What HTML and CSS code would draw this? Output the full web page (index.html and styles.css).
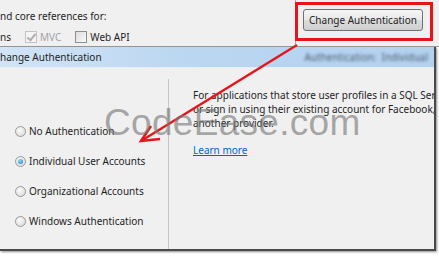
FILE: index.html
```html
<!DOCTYPE html>
<html lang="en">
<head>
    <meta charset="UTF-8">
    <meta name="viewport" content="width=device-width, initial-scale=1.0">
    <title>Change Authentication</title>
    <link rel="stylesheet" href="styles.css">
</head>
<body>
    <div class="screen">
        <div class="host">
            <div class="host-left">
                <p class="host-line">nd core references for:</p>
                <div class="host-line refs">
                    <span>ns</span>
                    <label class="ref disabled"><span class="check checked"></span>MVC</label>
                    <label class="ref"><span class="check"></span>Web API</label>
                </div>
            </div>
            <div class="host-right">
                <button class="btn">Change Authentication</button>
            </div>
        </div>

        <div class="dialog">
            <div class="titlebar">
                <span>hange Authentication</span>
                <span class="blurred">Authentication:&nbsp; Individual</span>
            </div>
            <div class="dialog-body">
                <div class="options">
                    <label class="option"><span class="radio"></span>No Authentication</label>
                    <label class="option"><span class="radio selected"></span>Individual User Accounts</label>
                    <label class="option"><span class="radio"></span>Organizational Accounts</label>
                    <label class="option"><span class="radio"></span>Windows Authentication</label>
                </div>
                <div class="info">
                    <p class="desc">For applications that store user profiles in a SQL Server database. Users can register,</p>
                    <p class="desc">or sign in using their existing account for Facebook, Twitter, Google, Microsoft, or</p>
                    <p class="desc">another provider.</p>
                    <a class="learn" href="#">Learn more</a>
                </div>
            </div>
        </div>

        <!-- annotation drawn on top of the screenshot -->
        <div class="highlight"></div>
        <svg class="arrow" width="439" height="257" viewBox="0 0 439 257">
            <path d="M297 45 L141 141" stroke="#e8141c" stroke-width="2.5" fill="none"/>
            <path d="M151 126 L141 141 L160 139" stroke="#e8141c" stroke-width="2.5" fill="none"/>
        </svg>
        <div class="watermark">CodeEase.com</div>
    </div>
</body>
</html>
```

FILE: styles.css
```css
* {
    box-sizing: border-box;
}
body {
    margin: 0;
    background-color: #fff;
    font-family: "Noto Sans", "Open Sans", sans-serif;
    font-size: 10px;
    color: #1e1e1e;
}
.screen {
    position: relative;
    width: 439px;
    height: 257px;
    overflow: hidden;
}
.host {
    display: flex;
    height: 47px;
    background-color: #f0f0f0;
    border-bottom: 1px solid #9a9a9a;
}
.host-left {
    width: 296px;
    border-right: 1px solid #a8a8a8;
    padding-top: 8px;
}
.host-line {
    margin: 0;
    height: 16px;
    line-height: 16px;
    white-space: nowrap;
}
.refs {
    display: flex;
    align-items: center;
    margin-top: 5px;
}
.ref {
    display: flex;
    align-items: center;
    gap: 3px;
    margin-left: 14px;
}
.disabled {
    color: #a3a3a3;
}
.check {
    width: 12px;
    height: 12px;
    border: 1px solid #8f8f8f;
    background: linear-gradient(135deg, #dcdcdc, #fafafa);
    position: relative;
}
.disabled .check {
    border-color: #c4c4c4;
    background: #f4f4f4;
}
.checked::after {
    content: "";
    position: absolute;
    left: 3px;
    top: 0px;
    width: 3px;
    height: 7px;
    border: solid #b0b0b0;
    border-width: 0 2px 2px 0;
    transform: rotate(40deg);
}
.host-right {
    flex: 1;
    padding: 9px 0 0 7px;
}
.btn {
    font-family: inherit;
    font-size: 10px;
    color: #1e1e1e;
    width: 120px;
    height: 22px;
    border: 1px solid #707070;
    border-radius: 3px;
    background: linear-gradient(#f6f6f6 0%, #e8e8e8 50%, #dcdcdc 51%, #cfcfcf 100%);
    padding: 0;
}
.dialog {
    width: 436px;
    height: 204px;
    background-color: #f0f0f0;
    border-right: 2px solid #4a4a4a;
    border-bottom: 2px solid #4a4a4a;
    box-shadow: 1px 1px 2px rgba(0, 0, 0, 0.45);
    overflow: hidden;
}
.titlebar {
    display: flex;
    justify-content: space-between;
    align-items: center;
    height: 21px;
    padding-right: 6px;
    background: linear-gradient(90deg, #d2e4f6 0%, #bad6f1 45%, #b4d1ee 100%);
    border-bottom: 1px solid #e6eef6;
    white-space: nowrap;
}
.blurred {
    color: transparent;
    text-shadow: 0 0 3px #4c5e74;
}
.dialog-body {
    display: flex;
    padding-top: 11px;
    height: 181px;
}
.options {
    flex-shrink: 0;
    width: 169px;
    border-right: 1px solid #c6c6c6;
    padding: 37px 0 0 15px;
}
.option {
    display: flex;
    align-items: center;
    gap: 3px;
    height: 30px;
    white-space: nowrap;
}
.radio {
    width: 11px;
    height: 11px;
    border-radius: 50%;
    border: 1px solid #9a9a9a;
    background: radial-gradient(circle at 40% 35%, #fbfbfb, #d4d4d4);
    position: relative;
}
.selected::after {
    content: "";
    position: absolute;
    left: 2px;
    top: 2px;
    width: 5px;
    height: 5px;
    border-radius: 50%;
    background: radial-gradient(circle at 40% 35%, #8fdcfa, #1877b8);
}
.info {
    flex: 1;
    min-width: 0;
    padding: 9px 0 0 24px;
    white-space: nowrap;
}
.desc {
    margin: 0;
    line-height: 14px;
}
.learn {
    display: inline-block;
    margin-top: 13px;
    line-height: 14px;
    color: #0066cc;
}
.highlight {
    position: absolute;
    left: 295px;
    top: 2px;
    width: 138px;
    height: 39px;
    border: 3px solid #e8141c;
}
.arrow {
    position: absolute;
    left: 0;
    top: 0;
}
.watermark {
    position: absolute;
    left: 104px;
    top: 102px;
    font-family: "Liberation Sans", Arial, sans-serif;
    font-size: 37px;
    letter-spacing: 0.3px;
    color: rgba(120, 120, 120, 0.65);
}
```
